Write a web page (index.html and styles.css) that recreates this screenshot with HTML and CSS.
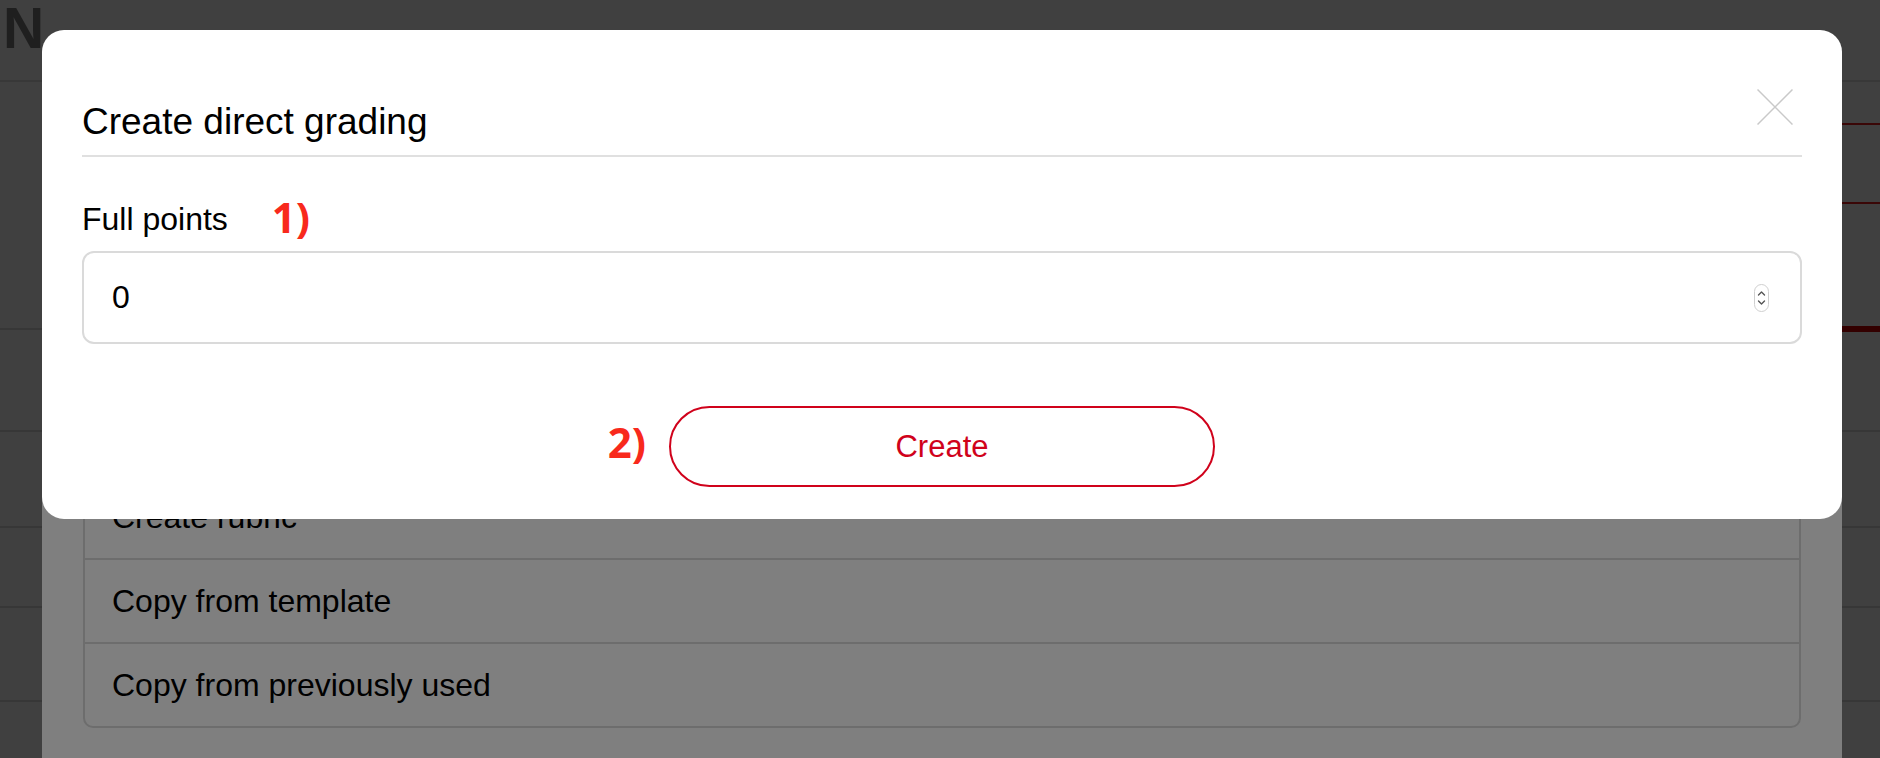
FILE: index.html
```html
<!DOCTYPE html>
<html lang="en">
<head>
<meta charset="utf-8">
<title>Create direct grading</title>
<link rel="stylesheet" href="styles.css">
</head>
<body>
<div class="page">
  <header class="topbar"><span class="logo">N</span></header>
  <div class="page-body">
    <div class="row row-first">
      <div class="bars">
        <div class="bar"></div>
        <div class="bar"></div>
        <div class="bar bar-thick"></div>
      </div>
    </div>
    <div class="row row-a"></div>
    <div class="row row-b"></div>
    <div class="row row-c"></div>
    <div class="row row-d"></div>
  </div>
</div>

<div class="modal modal-under">
  <ul class="options">
    <li>Create rubric</li>
    <li>Copy from template</li>
    <li>Copy from previously used</li>
  </ul>
</div>

<div class="modal modal-top">
  <div class="modal-header">
    <h2 class="modal-title">Create direct grading</h2>
    <button class="close" aria-label="Close">
      <svg width="36" height="36" viewBox="0 0 36 36"><path d="M0.5 0.5 L35.5 35.5 M35.5 0.5 L0.5 35.5" stroke="#c9c9c9" stroke-width="1.5" fill="none"/></svg>
    </button>
  </div>
  <div class="form-group">
    <div class="label-row">
      <label class="label">Full points</label>
      <span class="annot annot-1">1)</span>
    </div>
    <div class="input">
      <span class="input-value">0</span>
      <span class="spinner">
        <svg width="15" height="28" viewBox="0 0 15 28">
          <rect x="0.5" y="0.5" width="14" height="27" rx="7" ry="7" fill="#fff" stroke="#cfcfcf"/>
          <path d="M4.5 11 L7.5 8 L10.5 11" stroke="#555" stroke-width="1.4" fill="none" stroke-linecap="round" stroke-linejoin="round"/>
          <path d="M4.5 17 L7.5 20 L10.5 17" stroke="#555" stroke-width="1.4" fill="none" stroke-linecap="round" stroke-linejoin="round"/>
        </svg>
      </span>
    </div>
  </div>
  <div class="modal-footer">
    <span class="annot annot-2">2)</span>
    <button class="btn-create">Create</button>
  </div>
</div>
</body>
</html>
```
FILE: styles.css
```css
html, body {
  margin: 0;
  padding: 0;
}
body {
  width: 1880px;
  height: 758px;
  overflow: hidden;
  background: #404040;
  font-family: "Liberation Sans", Arial, Helvetica, sans-serif;
  position: relative;
}

/* underlying page (dimmed) */
.topbar {
  height: 80px;
  border-bottom: 2px solid #383838;
  box-sizing: content-box;
}
.logo {
  display: block;
  padding-left: 3px;
  font-size: 57px;
  line-height: 57px;
  font-weight: bold;
  color: #1f1f1f;
}
.row {
  border-bottom: 2px solid #373737;
}
.row-first { height: 246px; }
.row-a { height: 100px; }
.row-b { height: 94px; }
.row-c { height: 78px; }
.row-d { height: 92px; }
.bars {
  width: 400px;
  margin-left: auto;
  padding-top: 41px;
}
.bar {
  height: 2px;
  background: #3a0707;
  margin-bottom: 77px;
}
.bar-thick {
  height: 6px;
  background: #330000;
  margin-bottom: 0;
  margin-top: 122px;
}

/* modals */
.modal {
  position: absolute;
  left: 42px;
  width: 1800px;
  box-sizing: border-box;
}
.modal-under {
  top: 90px;
  bottom: 0;
  background: #7f7f7f;
  padding: 384px 41px 0;
}
.options {
  list-style: none;
  margin: 0;
  padding: 0;
  border: 2px solid #6d6d6d;
  border-radius: 10px;
}
.options li {
  height: 84px;
  box-sizing: border-box;
  line-height: 82px;
  border-bottom: 2px solid #6d6d6d;
  padding: 0 27px;
  font-size: 32px;
  color: #000;
}
.options li:last-child {
  border-bottom: none;
  height: 82px;
}

.modal-top {
  top: 30px;
  background: #fff;
  border-radius: 22px;
  padding: 59px 40px 32px;
}
.modal-header {
  display: flex;
  justify-content: space-between;
  align-items: flex-start;
  border-bottom: 2px solid #e0e0e0;
  padding-bottom: 11px;
}
.modal-title {
  margin: 0;
  padding-top: 11px;
  font-size: 37px;
  line-height: 44px;
  font-weight: normal;
  color: #000;
}
.close {
  border: none;
  background: none;
  padding: 0;
  margin-right: 9px;
  width: 36px;
  height: 36px;
  display: block;
}
.close svg { display: block; }

.form-group {
  margin-top: 43px;
}
.label-row {
  display: flex;
  align-items: flex-start;
  height: 38px;
}
.label {
  font-size: 32px;
  line-height: 38px;
  color: #000;
}
.annot {
  font-family: "Open Sans", "DejaVu Sans", sans-serif;
  font-weight: 700;
  font-size: 42px;
  color: #f8291c;
}
.annot-1 {
  line-height: 38px;
  margin-left: 44px;
  margin-top: -2px;
}
.input {
  margin-top: 13px;
  height: 93px;
  box-sizing: border-box;
  border: 2px solid #dadada;
  border-radius: 12px;
  display: flex;
  align-items: center;
  justify-content: space-between;
  padding: 0 31px 0 28px;
}
.input-value {
  font-size: 32px;
  color: #000;
}
.spinner svg { display: block; }

.modal-footer {
  margin-top: 62px;
  display: grid;
  grid-template-columns: 1fr 546px 1fr;
  align-items: center;
}
.annot-2 {
  justify-self: end;
  margin-right: 23px;
  line-height: 42px;
  margin-bottom: 10px;
}
.btn-create {
  height: 81px;
  border: 2px solid #d0021b;
  border-radius: 41px;
  background: #fff;
  color: #d0021b;
  font-family: "Liberation Sans", Arial, Helvetica, sans-serif;
  font-size: 31px;
  padding: 0;
}
```
